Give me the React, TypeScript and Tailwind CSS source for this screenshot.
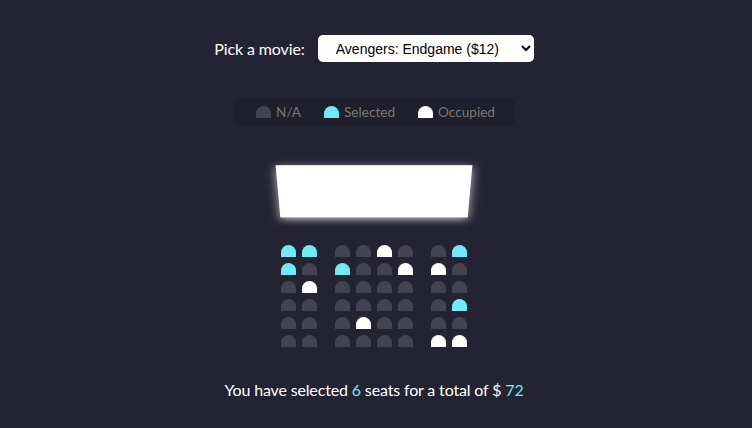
import { useState } from 'react'

type SeatState = 'na' | 'selected' | 'occupied'

const seatClasses: Record<SeatState, string> = {
  na: 'bg-[#444451]',
  selected: 'bg-[#6feaf6]',
  occupied: 'bg-white',
}

// s = selected, o = occupied, . = free
const layout = [
  'ss..o..s',
  's.s..oo.',
  '.o......',
  '.......s',
  '...o....',
  '......oo',
]

const toState = (c: string): SeatState =>
  c === 's' ? 'selected' : c === 'o' ? 'occupied' : 'na'

const Seat = ({ state, className = '' }: { state: SeatState; className?: string }) => (
  <div
    className={`m-[3px] h-[12px] w-[15px] rounded-t-[10px] ${seatClasses[state]} ${className}`}
  />
)

const movies = [
  { name: 'Avengers: Endgame', price: 12 },
  { name: 'Joker', price: 12 },
  { name: 'Toy Story 4', price: 8 },
  { name: 'The Lion King', price: 9 },
]

export default function App() {
  const [movie, setMovie] = useState(0)
  const rows = layout.map((r) => r.split('').map(toState))
  const count = rows.flat().filter((s) => s === 'selected').length
  const total = count * movies[movie].price

  return (
    <div className="flex h-screen flex-col items-center bg-[#242333] pr-[4px] pt-[35px] font-['Lato',sans-serif] text-white">
      <div className="flex h-[27px] items-center">
        <label className="mr-[13px] text-[16px] leading-[24px] tracking-[-0.1px]">Pick a movie:</label>
        <select
          value={movie}
          onChange={(e) => setMovie(Number(e.target.value))}
          className="h-[27px] w-[216px] rounded-[5px] border-0 bg-white pl-[14px] pr-[15px] font-['Liberation_Sans',Arial,sans-serif] text-[14px] leading-[17px] text-black"
        >
          {movies.map((m, i) => (
            <option key={m.name} value={i}>
              {m.name} (${m.price})
            </option>
          ))}
        </select>
      </div>

      <ul className="mt-[36px] flex h-[28px] items-center rounded-[5px] bg-black/10 px-[10px] text-[#777]">
        <li className="mx-[10px] flex items-center">
          <Seat state="na" />
          <small className="ml-[2px] text-[13.6px] leading-[16px]">N/A</small>
        </li>
        <li className="mx-[10px] flex items-center">
          <Seat state="selected" />
          <small className="ml-[2px] text-[13.6px] leading-[16px]">Selected</small>
        </li>
        <li className="mx-[10px] flex items-center">
          <Seat state="occupied" />
          <small className="ml-[2px] text-[13.6px] leading-[16px]">Occupied</small>
        </li>
      </ul>

      <div className="mt-[16px] flex flex-col [perspective:1000px]">
        <div className="my-[15px] h-[70px] w-full bg-white shadow-[0_3px_10px_rgba(255,255,255,0.7)] [transform:rotateX(-45deg)]" />
        {rows.map((row, ri) => (
          <div key={ri} className="flex">
            {row.map((s, si) => (
              <Seat
                key={si}
                state={s}
                className={si === 1 ? 'mr-[15px]' : si === 6 ? 'ml-[15px]' : ''}
              />
            ))}
          </div>
        ))}
      </div>

      <p className="mt-[28px] text-[16px] leading-[24px] tracking-[-0.15px]">
        You have selected <span className="text-[#6feaf6]">{count}</span> seats for a total of
        ${' '}
        <span className="text-[#6feaf6]">{total}</span>
      </p>
    </div>
  )
}
